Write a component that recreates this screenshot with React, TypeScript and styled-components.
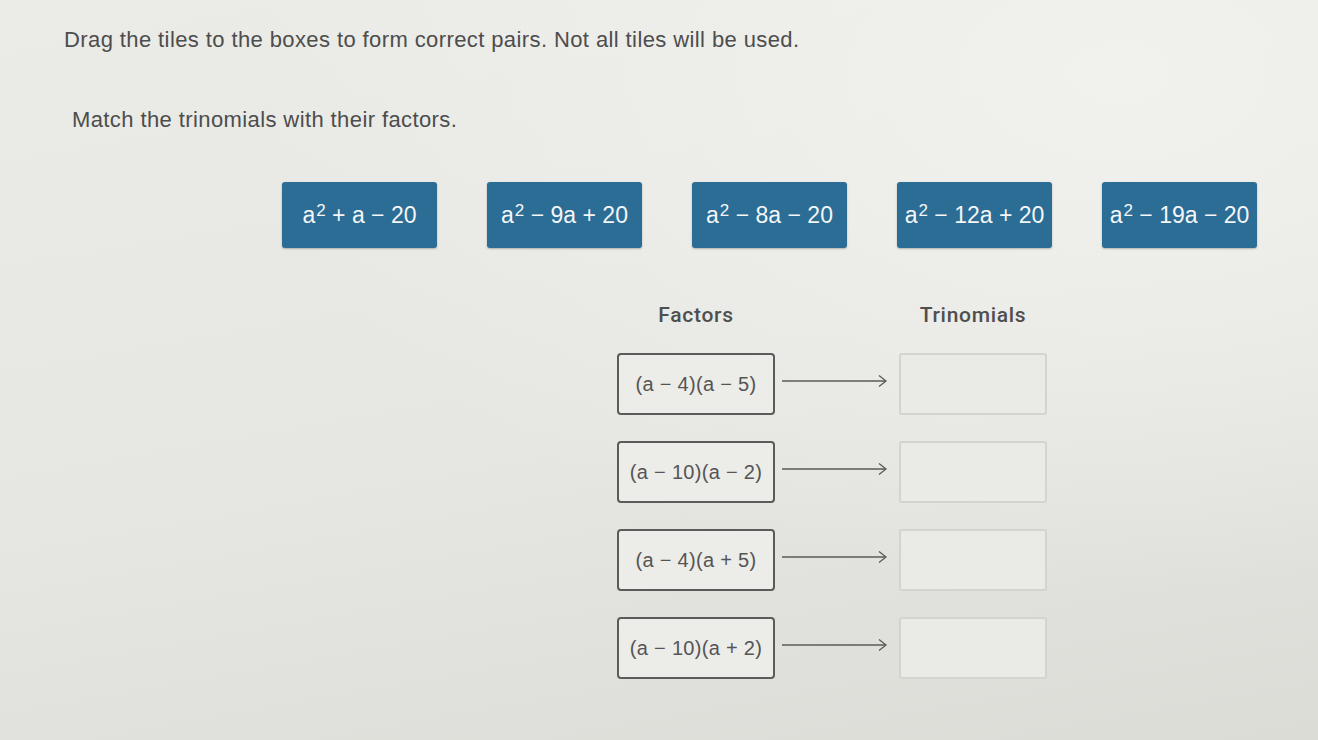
import { Fragment } from 'react';
import styled, { createGlobalStyle } from 'styled-components';

const GlobalStyle = createGlobalStyle`
  html, body {
    margin: 0;
    padding: 0;
  }
  body {
    background: radial-gradient(ellipse at 85% 10%, #f1f1ee 0%, rgba(241, 241, 238, 0) 55%),
      linear-gradient(170deg, #ebebe7 0%, #e6e6e2 55%, #dcdcd7 100%);
    min-height: 100vh;
    font-family: "Liberation Sans", Arial, sans-serif;
    color: #4a4a4a;
  }
`;

const Page = styled.main`
  box-sizing: border-box;
  min-height: 740px;
  padding: 28px 0 0 64px;
`;

const Prompt = styled.p<{ $indent?: number; $gap?: number }>`
  margin: ${(p) => p.$gap ?? 0}px 0 0 ${(p) => p.$indent ?? 0}px;
  font-size: 22px;
  line-height: 24px;
  letter-spacing: 0.4px;
  color: #4d4d4d;
`;

const TileRow = styled.div`
  display: flex;
  gap: 50px;
  margin: 50px 0 0 218px;
`;

const Tile = styled.div`
  box-sizing: border-box;
  width: 155px;
  height: 66px;
  display: flex;
  align-items: center;
  justify-content: center;
  background: #2b6d95;
  border-radius: 3px;
  box-shadow: 0 1px 2px rgba(0, 0, 0, 0.25);
  color: #f4f6f8;
  font-size: 23px;
  white-space: nowrap;

  sup {
    font-size: 17px;
    line-height: 0;
    position: relative;
    top: -4px;
    margin-left: 1px;
  }
`;

const Board = styled.section`
  display: grid;
  grid-template-columns: 158px 124px 148px;
  grid-template-rows: 24px;
  grid-auto-rows: 62px;
  row-gap: 26px;
  margin: 55px 0 0 553px;
`;

const ColumnTitle = styled.h3<{ $col: number }>`
  grid-column: ${(p) => p.$col};
  margin: 0;
  text-align: center;
  font-family: Roboto, "Liberation Sans", sans-serif;
  font-weight: 500;
  font-size: 21px;
  line-height: 24px;
  letter-spacing: 0.7px;
  color: #4f4f4f;
`;

const FactorCard = styled.div`
  box-sizing: border-box;
  display: flex;
  align-items: center;
  justify-content: center;
  border: 2px solid #5b5b5b;
  border-radius: 4px;
  background: #ececE8;
  font-size: 20px;
  letter-spacing: 0.3px;
  color: #555555;
  white-space: nowrap;
`;

const Link = styled.div`
  display: flex;
  align-items: center;
  padding: 0 10px 6px 7px;
`;

const DropBox = styled.div`
  box-sizing: border-box;
  border: 2px solid #d3d3cf;
  border-radius: 3px;
  background: #eaeae6;
`;

const tiles = ['+ a − 20', '− 9a + 20', '− 8a − 20', '− 12a + 20', '− 19a − 20'];

const factors = ['(a − 4)(a − 5)', '(a − 10)(a − 2)', '(a − 4)(a + 5)', '(a − 10)(a + 2)'];

const Arrow = () => (
  <svg width="107" height="14" viewBox="0 0 107 14" fill="none">
    <line x1="0" y1="7" x2="104" y2="7" stroke="#5a5a5a" strokeWidth="1.3" />
    <polyline points="97,1.5 104,7 97,12.5" stroke="#5a5a5a" strokeWidth="1.3" fill="none" />
  </svg>
);

export default function App() {
  return (
    <>
      <GlobalStyle />
      <Page>
        <Prompt>Drag the tiles to the boxes to form correct pairs. Not all tiles will be used.</Prompt>
        <Prompt $indent={8} $gap={56}>Match the trinomials with their factors.</Prompt>

        <TileRow>
          {tiles.map((rest) => (
            <Tile key={rest}>
              a<sup>2</sup>&nbsp;{rest}
            </Tile>
          ))}
        </TileRow>

        <Board>
          <ColumnTitle $col={1}>Factors</ColumnTitle>
          <ColumnTitle $col={3}>Trinomials</ColumnTitle>
          {factors.map((f) => (
            <Fragment key={f}>
              <FactorCard>{f}</FactorCard>
              <Link>
                <Arrow />
              </Link>
              <DropBox />
            </Fragment>
          ))}
        </Board>
      </Page>
    </>
  );
}
